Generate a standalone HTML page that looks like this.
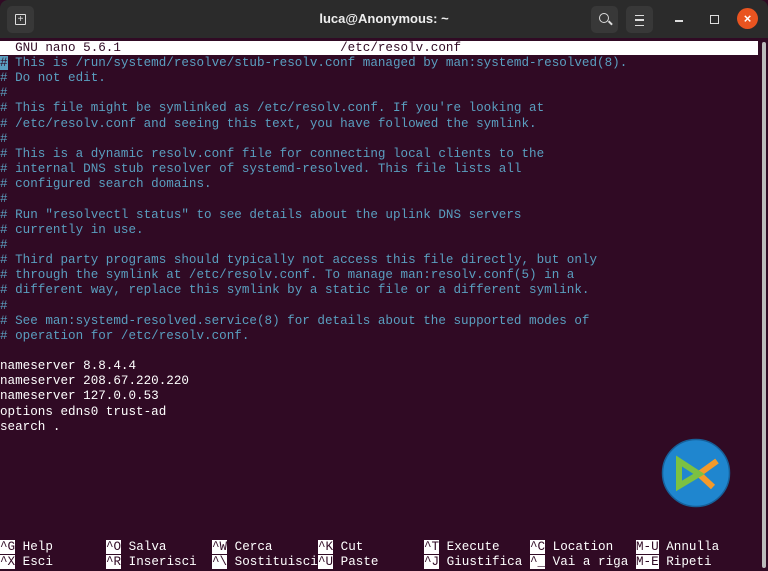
<!DOCTYPE html><html><head><style>
body{margin:0;width:768px;height:571px;overflow:hidden;background:#300a24;font-family:"Liberation Mono",monospace;position:relative}
.tb{position:absolute;left:0;top:0;width:768px;height:38px;background:#2b2b2b;border-radius:8px 8px 0 0}
.title{position:absolute;top:11px;width:100%;text-align:center;color:#eee;font:bold 13px "Liberation Sans",sans-serif}
.btn{position:absolute;top:6px;width:27px;height:27px;background:#383838;border-radius:5px}
.t{position:absolute;left:0;font-size:12.6px;line-height:15.15px;white-space:pre;color:#fff}
.c{color:#5a9fc0}
.hdr{position:absolute;left:0;top:41px;width:758px;height:14px;background:#fff;color:#300a24;font-size:12.6px;line-height:14px;white-space:pre}
.k{background:#fff;color:#300a24}
</style></head><body>
<div class="tb">
<div class="btn" style="left:7px"><div style="position:absolute;left:8px;top:8px;width:9px;height:9px;border:1.5px solid #ddd;border-radius:1px;font:10px sans-serif;color:#ddd;text-align:center;line-height:9px">+</div></div>
<div class="title">luca@Anonymous: ~</div>
<div class="btn" style="left:591px"><div style="position:absolute;left:8px;top:7px;width:8px;height:8px;border:1.5px solid #ddd;border-radius:50%"></div><div style="position:absolute;left:17px;top:16px;width:5px;height:1.5px;background:#ddd;transform:rotate(45deg)"></div></div>
<div class="btn" style="left:626px"><div style="position:absolute;left:9px;top:9px;width:9px;height:9px;border-top:1.5px solid #ddd;border-bottom:1.5px solid #ddd"></div><div style="position:absolute;left:9px;top:13px;width:9px;height:1.5px;background:#ddd"></div></div>
<div style="position:absolute;left:675px;top:20px;width:8px;height:1.5px;background:#ddd"></div>
<div style="position:absolute;left:710px;top:15px;width:7px;height:7px;border:1.5px solid #ddd"></div>
<div style="position:absolute;left:737px;top:8px;width:21px;height:21px;border-radius:50%;background:#e95420;color:#fff;font:bold 13px sans-serif;text-align:center;line-height:21px">×</div>
</div>
<div class="hdr">  GNU nano 5.6.1                             /etc/resolv.conf</div>
<div style="position:absolute;left:762px;top:42px;width:4px;height:526px;background:#bbb;border-radius:2px"></div>
<div class="t" style="top:56px"><span class="c"><span style="background:#5a9fc0;color:#300a24">#</span> This is /run/systemd/resolve/stub-resolv.conf managed by man:systemd-resolved(8).
# Do not edit.
#
# This file might be symlinked as /etc/resolv.conf. If you're looking at
# /etc/resolv.conf and seeing this text, you have followed the symlink.
#
# This is a dynamic resolv.conf file for connecting local clients to the
# internal DNS stub resolver of systemd-resolved. This file lists all
# configured search domains.
#
# Run "resolvectl status" to see details about the uplink DNS servers
# currently in use.
#
# Third party programs should typically not access this file directly, but only
# through the symlink at /etc/resolv.conf. To manage man:resolv.conf(5) in a
# different way, replace this symlink by a static file or a different symlink.
#
# See man:systemd-resolved.service(8) for details about the supported modes of
# operation for /etc/resolv.conf.</span>

nameserver 8.8.4.4
nameserver 208.67.220.220
nameserver 127.0.0.53
options edns0 trust-ad
search .</div>
<div class="t" style="top:540px;left:0"><span class="k">^G</span> Help
<span class="k">^X</span> Esci</div>
<div class="t" style="top:540px;left:106px"><span class="k">^O</span> Salva
<span class="k">^R</span> Inserisci</div>
<div class="t" style="top:540px;left:212px"><span class="k">^W</span> Cerca
<span class="k">^\</span> Sostituisci</div>
<div class="t" style="top:540px;left:318px"><span class="k">^K</span> Cut
<span class="k">^U</span> Paste</div>
<div class="t" style="top:540px;left:424px"><span class="k">^T</span> Execute
<span class="k">^J</span> Giustifica</div>
<div class="t" style="top:540px;left:530px"><span class="k">^C</span> Location
<span class="k">^_</span> Vai a riga</div>
<div class="t" style="top:540px;left:636px"><span class="k">M-U</span> Annulla
<span class="k">M-E</span> Ripeti</div>
<svg style="position:absolute;left:661px;top:438px" width="70" height="70" viewBox="0 0 70 70">
<circle cx="35" cy="35" r="33.5" fill="#1f86cf" stroke="#16609a" stroke-width="1.5"/>
<path d="M56 23 L38 36 L52 49" fill="none" stroke="#f39a2b" stroke-width="6" stroke-linejoin="miter"/>
<path d="M18 23 L18 48 L38 36 Z" fill="none" stroke="#7cc142" stroke-width="6" stroke-linejoin="miter"/>
</svg>
</body></html>
